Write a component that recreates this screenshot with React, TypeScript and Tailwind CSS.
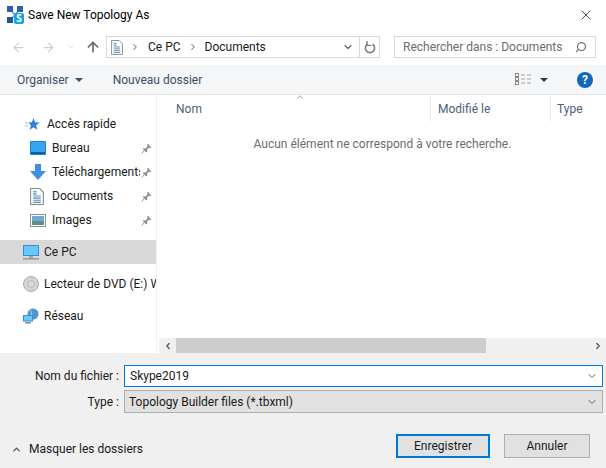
import { ArrowLeft, ArrowRight, ArrowUp, ChevronDown, ChevronUp, ChevronLeft, ChevronRight, Search, X } from "lucide-react";

const FONT = "font-['Roboto','Open_Sans',sans-serif]";

const AppIcon = () => (
  <svg width="17" height="18" viewBox="0 0 17 18">
    <path d="M3 3 L8 9 M13 3 L8 9 M3 14 L8 9" stroke="#6f8fc8" strokeWidth="1.4" />
    <rect x="0" y="0" width="6" height="6" fill="#2f5cab" />
    <rect x="10" y="0" width="6" height="6" fill="#2f5cab" />
    <rect x="0" y="11" width="6" height="6" fill="#27509c" />
    <rect x="7" y="7" width="10" height="11" rx="2" fill="#12a5e0" />
    <text x="12" y="16" fontSize="10" fontWeight="700" fill="#fff" textAnchor="middle" fontFamily="Open Sans">S</text>
  </svg>
);

const DocIcon = ({ size = 16 }: { size?: number }) => (
  <svg width={size} height={size + 3} viewBox="0 0 13 16">
    <path d="M.5.5h8.5l3.5 3.5v11.5H.5z" fill="#fff" stroke="#85898d" />
    <path d="M3 3.5h3M3 5.5h3" stroke="#2b7fc9" />
    <path d="M3 7.5h7M3 9.5h7M3 11.5h7M3 13.5h7" stroke="#4f8db5" />
  </svg>
);

const DesktopIcon = () => (
  <svg width="16" height="14" viewBox="0 0 16 14">
    <rect x="0" y="0" width="16" height="14" rx="1" fill="#1e7fd8" />
    <rect x="1" y="1" width="14" height="10" fill="#37a5f0" />
    <rect x="1" y="11" width="14" height="2" fill="#0f5ea8" />
  </svg>
);

const DownIcon = () => (
  <svg width="16" height="16" viewBox="0 0 16 16">
    <path d="M5 0h6v7h5l-8 9-8-9h5z" fill="#3f8fe0" />
  </svg>
);

const PictureIcon = () => (
  <svg width="16" height="13" viewBox="0 0 16 13">
    <rect x=".5" y=".5" width="15" height="12" fill="#fff" stroke="#8a8f94" />
    <rect x="2" y="2" width="12" height="5" fill="#6fa8d8" />
    <path d="M2 7h12v4H2z" fill="#5f8f80" />
  </svg>
);

const PinIcon = () => (
  <svg width="11" height="11" viewBox="0 0 11 11">
    <path d="M6.5.5l4 4-1 .6-1.5-.4-2 2 .2 2-1 .8L1.8 6.2l.8-1 2 .2 2-2-.4-1.4z" fill="#8f8f8f" />
    <path d="M3 8L.5 10.5" stroke="#8f8f8f" />
  </svg>
);

const QuickIcon = () => (
  <svg width="15" height="13" viewBox="0 0 15 13">
    <path d="M8.5 0l1.6 4.2 4.6.2-3.6 2.9 1.3 4.5-3.9-2.6-3.9 2.6 1.3-4.5L3.5 4.4l3.4-.2z" fill="#2f7fd0" />
    <path d="M0 5h3M0 8h3" stroke="#8fc0ea" />
  </svg>
);

const PcIcon = () => (
  <svg width="16" height="15" viewBox="0 0 16 15">
    <rect x="0" y="0" width="16" height="11" fill="#2f8fdd" />
    <rect x="1" y="1" width="14" height="9" fill="#6cc6f7" />
    <rect x="6" y="11" width="4" height="2" fill="#9aa7b2" />
    <rect x="0" y="13" width="16" height="1.5" fill="#8a9aa8" />
  </svg>
);

const DvdIcon = () => (
  <svg width="16" height="16" viewBox="0 0 16 16">
    <circle cx="8" cy="8" r="7.5" fill="#d2d4d6" stroke="#a8acaf" />
    <circle cx="8" cy="8" r="3.2" fill="#eef0f1" stroke="#aaaeb1" />
    <circle cx="8" cy="8" r="1.2" fill="#fff" stroke="#9ea2a5" strokeWidth=".6" />
  </svg>
);

const NetIcon = () => (
  <svg width="16" height="16" viewBox="0 0 16 16">
    <circle cx="10" cy="6" r="5.5" fill="#4f95cf" />
    <path d="M7 2c2 1 2 6 1 9" stroke="#bcd9ef" fill="none" />
    <rect x="0" y="7" width="10" height="6.5" fill="#2f8fdd" />
    <rect x="1" y="8" width="8" height="4.5" fill="#6cc6f7" />
    <rect x="2" y="14" width="6" height="1.5" fill="#7f8f9c" />
  </svg>
);

const ViewIcon = () => (
  <svg width="16" height="13" viewBox="0 0 16 13" fill="none">
    <rect x=".5" y=".5" width="3" height="3" stroke="#8a8a8a" />
    <rect x=".5" y="4.5" width="3" height="3" stroke="#8a8a8a" />
    <rect x=".5" y="8.5" width="3" height="3" stroke="#8a8a8a" />
    <path d="M6 2h4M12 2h4M6 6h4M12 6h4M6 10h4M12 10h4" stroke="#a0a0a0" />
  </svg>
);

const RefreshIcon = () => (
  <svg width="12" height="13" viewBox="0 0 12 13" fill="none">
    <path d="M3.5 3.2A4.6 4.6 0 1 0 8.5 3.2" stroke="#7f7f7f" strokeWidth="1.6" />
    <path d="M3 0v4.4h4.4" stroke="#7f7f7f" strokeWidth="1.4" />
  </svg>
);

const NavRow = ({ icon, label, pin, indent = "pl-[30px]" }: { icon: React.ReactNode; label: string; pin?: boolean; indent?: string }) => (
  <div className={`flex h-6 items-center ${indent} text-[12px] text-[#1a1a1a]`}>
    <span className="flex w-[22px] shrink-0 items-center justify-start">{icon}</span>
    <span className="w-[88px] overflow-hidden whitespace-nowrap">{label}</span>
    {pin && <span className="ml-[1px] flex items-center"><PinIcon /></span>}
  </div>
);

export default function App() {
  return (
    <div className={`flex h-[468px] w-[606px] flex-col overflow-hidden bg-white ${FONT} text-[12px]`}>
      {/* title bar */}
      <div className="flex h-[30px] shrink-0 items-center pl-[7px] pr-[12px]">
        <AppIcon />
        <span className="ml-[4px] text-[12px] text-black">Save New Topology As</span>
        <X size={16} strokeWidth={1} className="ml-auto text-black" />
      </div>

      {/* address row */}
      <div className="flex h-[35px] shrink-0 items-center pl-[11px] pr-[10px] pb-[1px]">
        <ArrowLeft size={15} className="text-[#d0d0d0]" />
        <ArrowRight size={15} className="ml-[15px] text-[#d0d0d0]" />
        <ChevronDown size={10} className="ml-[10px] text-[#d0d0d0]" />
        <ArrowUp size={16} strokeWidth={2.5} className="ml-[9px] text-[#6a6a6a]" />
        <div className="ml-[5px] flex h-[22px] w-[274px] items-center border border-[#d9d9d9]">
          <span className="ml-[4px] flex"><DocIcon size={12} /></span>
          <ChevronRight size={10} strokeWidth={2.5} className="ml-[7px] text-[#777]" />
          <span className="ml-[8px] text-[#1a1a1a]">Ce PC</span>
          <ChevronRight size={10} strokeWidth={2.5} className="ml-[7px] text-[#777]" />
          <span className="ml-[7px] text-[#1a1a1a]">Documents</span>
          <ChevronDown size={12} strokeWidth={2.5} className="ml-auto mr-[5px] text-[#666]" />
          <div className="flex h-full w-[20px] items-center justify-center border-l border-[#d9d9d9]">
            <RefreshIcon />
          </div>
        </div>
        <div className="ml-auto flex h-[22px] w-[202px] items-center border border-[#d9d9d9] pl-[8px] pr-[8px] text-[#6d6d6d]">
          <span className="whitespace-nowrap">Rechercher dans : Documents</span>
          <Search size={12} strokeWidth={2.5} className="ml-auto -scale-x-100 text-[#777]" />
        </div>
      </div>

      {/* toolbar */}
      <div className="flex h-[30px] shrink-0 items-center border-b border-[#e5e5e5] bg-[#f5f6f7] pl-[17px] pr-[13px] text-[#3b4f66]">
        <span>Organiser</span>
        <span className="ml-[6px] h-0 w-0 border-x-[4px] border-t-[4px] border-x-transparent border-t-[#3b4f66]" />
        <span className="ml-[30px]">Nouveau dossier</span>
        <span className="ml-auto"><ViewIcon /></span>
        <span className="ml-[9px] h-0 w-0 border-x-[4px] border-t-[4px] border-x-transparent border-t-[#1f3a5c]" />
        <span className="ml-[29px] flex h-4 w-4 items-center justify-center rounded-full bg-[#0f68c0] text-[12px] font-bold text-white">?</span>
      </div>

      {/* browser */}
      <div className="flex min-h-0 flex-1">
        <div className="flex w-[157px] shrink-0 flex-col border-r border-[#f0f0f0] pt-[17px]">
          <NavRow indent="pl-[25px]" icon={<span className="flex w-[19px]"><QuickIcon /></span>} label="Accès rapide" />
          <NavRow icon={<DesktopIcon />} label="Bureau" pin />
          <NavRow icon={<DownIcon />} label="Téléchargements" pin />
          <NavRow icon={<DocIcon size={14} />} label="Documents" pin />
          <NavRow icon={<PictureIcon />} label="Images" pin />
          <div className="mt-[8px] flex h-6 items-center bg-[#d9d9d9] pl-[23px] text-[#1a1a1a]">
            <span className="flex w-[21px]"><PcIcon /></span>
            Ce PC
          </div>
          <div className="mt-[8px] flex h-6 items-center overflow-hidden whitespace-nowrap pl-[23px] text-[#1a1a1a]">
            <span className="flex w-[21px] shrink-0"><DvdIcon /></span>
            Lecteur de DVD (E:) W
          </div>
          <div className="mt-[8px] flex h-6 items-center pl-[23px] text-[#1a1a1a]">
            <span className="flex w-[21px]"><NetIcon /></span>
            Réseau
          </div>
        </div>

        <div className="ml-[2px] flex min-w-0 flex-1 flex-col">
          <div className="relative mt-[1px] flex h-[25px] shrink-0 text-[#4c607a]">
            <ChevronUp size={10} className="absolute left-[136px] top-[-4px] text-[#888]" />
            <div className="flex w-[272px] items-center border-r border-[#e5e5e5] pl-[17px]">Nom</div>
            <div className="flex w-[120px] items-center border-r border-[#e5e5e5] pl-[7px]">Modifié le</div>
            <div className="flex items-center pl-[6px]">Type</div>
          </div>
          <div className="flex-1 pt-[14px] text-center text-[#6d6d6d]">Aucun élément ne correspond à votre recherche.</div>
          <div className="flex h-[15px] shrink-0 items-center bg-[#f0f0f0]">
            <span className="flex w-[17px] justify-center"><ChevronLeft size={10} strokeWidth={3} className="text-[#555]" /></span>
            <div className="h-full w-[310px] bg-[#cdcdcd]" />
            <ChevronRight size={10} strokeWidth={3} className="ml-auto mr-[3px] text-[#555]" />
          </div>
        </div>
      </div>

      {/* bottom panel */}
      <div className="flex h-[115px] shrink-0 flex-col bg-[#f0f0f0]">
        <div className="mt-[12px] flex h-[22px] items-center pr-[3px]">
          <span className="w-[119px] text-right text-[#1a1a1a]">Nom du fichier :</span>
          <div className="ml-[5px] flex h-full flex-1 items-center border border-[#0078d7] bg-white pl-[5px] text-[#1a1a1a]">
            Skype2019
            <ChevronDown size={12} className="ml-auto mr-[4px] text-[#666]" />
          </div>
        </div>
        <div className="mt-[3px] flex h-[23px] items-center pr-[3px]">
          <span className="w-[119px] text-right text-[#1a1a1a]">Type :</span>
          <div className="ml-[5px] flex h-full flex-1 items-center border border-[#adadad] bg-[#e1e1e1] pl-[4px] text-[#1a1a1a]">
            Topology Builder files (*.tbxml)
            <ChevronDown size={12} className="ml-auto mr-[4px] text-[#666]" />
          </div>
        </div>
        <div className="mt-[21px] flex items-center pr-[16px]">
          <div className="mt-[6px] flex items-center">
            <ChevronUp size={11} strokeWidth={3} className="ml-[11px] text-[#555]" />
            <span className="ml-[7px] text-[#1a1a1a]">Masquer les dossiers</span>
          </div>
          <button className="ml-auto h-[24px] w-[94px] border-2 border-[#0078d7] bg-[#e1e1e1] text-[#1a1a1a]">Enregistrer</button>
          <button className="ml-[14px] h-[24px] w-[86px] border border-[#adadad] bg-[#e1e1e1] text-[#1a1a1a]">Annuler</button>
        </div>
      </div>
    </div>
  );
}
